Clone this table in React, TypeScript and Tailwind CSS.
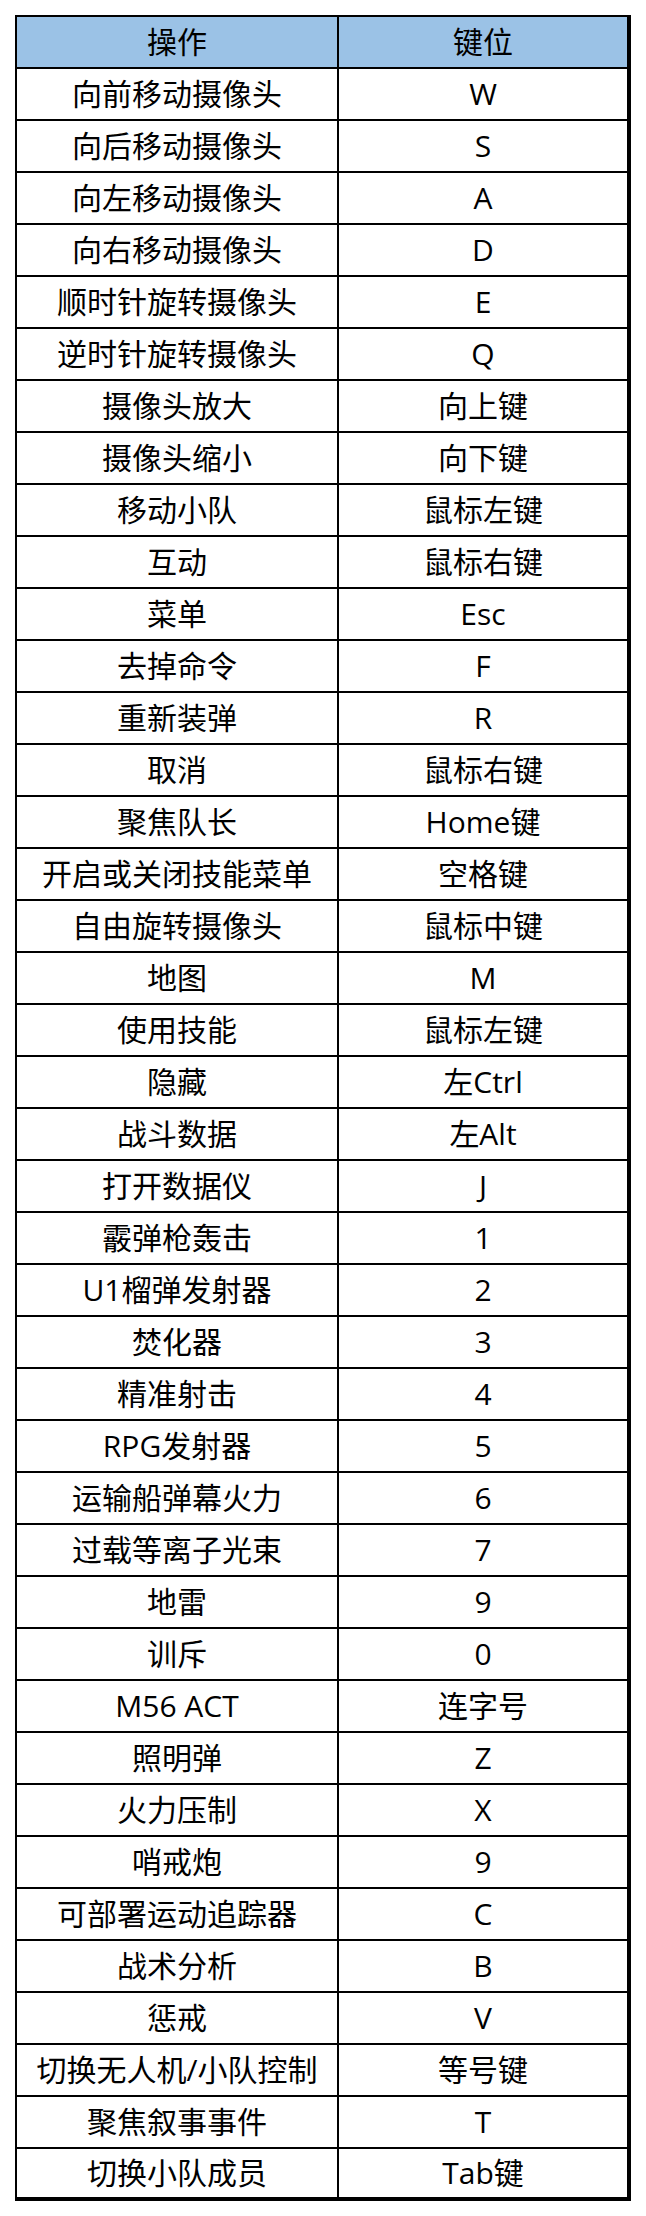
import React from "react";

// key bindings, in the order of the sheet
const ROWS: [string, string][] = [
  ["向前移动摄像头", "W"],
  ["向后移动摄像头", "S"],
  ["向左移动摄像头", "A"],
  ["向右移动摄像头", "D"],
  ["顺时针旋转摄像头", "E"],
  ["逆时针旋转摄像头", "Q"],
  ["摄像头放大", "向上键"],
  ["摄像头缩小", "向下键"],
  ["移动小队", "鼠标左键"],
  ["互动", "鼠标右键"],
  ["菜单", "Esc"],
  ["去掉命令", "F"],
  ["重新装弹", "R"],
  ["取消", "鼠标右键"],
  ["聚焦队长", "Home键"],
  ["开启或关闭技能菜单", "空格键"],
  ["自由旋转摄像头", "鼠标中键"],
  ["地图", "M"],
  ["使用技能", "鼠标左键"],
  ["隐藏", "左Ctrl"],
  ["战斗数据", "左Alt"],
  ["打开数据仪", "J"],
  ["霰弹枪轰击", "1"],
  ["U1榴弹发射器", "2"],
  ["焚化器", "3"],
  ["精准射击", "4"],
  ["RPG发射器", "5"],
  ["运输船弹幕火力", "6"],
  ["过载等离子光束", "7"],
  ["地雷", "9"],
  ["训斥", "0"],
  ["M56 ACT", "连字号"],
  ["照明弹", "Z"],
  ["火力压制", "X"],
  ["哨戒炮", "9"],
  ["可部署运动追踪器", "C"],
  ["战术分析", "B"],
  ["惩戒", "V"],
  ["切换无人机/小队控制", "等号键"],
  ["聚焦叙事事件", "T"],
  ["切换小队成员", "Tab键"],
];

function Row({ action, key_, header, last }: { action: string; key_: string; header?: boolean; last?: boolean }) {
  return (
    <div
      className={
        "flex " +
        (last ? "h-[48px] " : "h-[52px] border-b-2 border-black ") +
        (header ? "bg-[#9bc2e6]" : "bg-white")
      }
    >
      <div className="flex w-[322px] items-center justify-center border-r-2 border-black">{action}</div>
      <div className="flex flex-1 items-center justify-center">{key_}</div>
    </div>
  );
}

export default function App() {
  return (
    <div
      className="min-h-[2216px] bg-white pt-[15px] pl-[15px] text-[30px] leading-none text-black"
      style={{ fontFamily: '"Open Sans", "Noto Sans CJK SC", sans-serif' }}
    >
      <div className="w-[616px] border-t-2 border-l-2 border-r-4 border-b-4 border-black">
        <Row action="操作" key_="键位" header />
        {ROWS.map(([a, k], i) => (
          <Row key={i} action={a} key_={k} last={i === ROWS.length - 1} />
        ))}
      </div>
    </div>
  );
}
